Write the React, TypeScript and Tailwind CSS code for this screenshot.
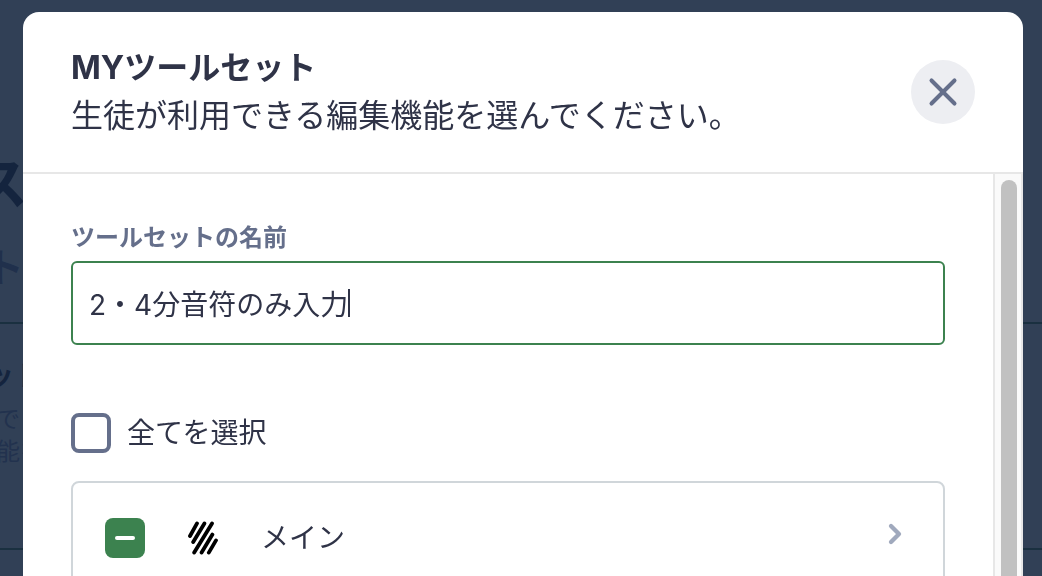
import React, { useEffect, useRef, useState } from 'react';
import { ChevronRight, X } from 'lucide-react';

function BrandMark() {
  return (
    <svg
      viewBox="0 0 30 34"
      className="w-[30px] h-[34px] shrink-0"
      fill="none"
      stroke="#000"
      strokeWidth="3.8"
      strokeLinecap="round"
      aria-hidden="true"
    >
      <path d="M9 2.4 2 15M16.4 2.4 5.2 21M24 2.4 6.2 31.6M24.4 13.6 13.6 31.6M28 19.4 20.8 31.6" />
    </svg>
  );
}

function Backdrop() {
  return (
    <main className="min-h-screen overflow-hidden bg-[#314056] text-[#14243e] whitespace-nowrap" aria-hidden="true">
      <div className="h-[324px] pt-[152px] border-b-2 border-[#1a3040]">
        <h1 className="-ml-7 w-14 text-[56px] leading-[64px] font-bold">ス</h1>
        <h2 className="-ml-4 w-10 pt-7 text-[40px] leading-[48px] font-bold text-[#20304c]">ト</h2>
      </div>
      <div className="h-[226px] pt-8 border-b-2 border-[#1a3040]">
        <h3 className="-ml-3.5 text-[28px] leading-[40px] font-bold">ット</h3>
        <p className="-ml-1 pt-2 text-2xl leading-8 text-[#22324e]">
          でき
          <br />
          能を
        </p>
      </div>
    </main>
  );
}

export default function App() {
  const [name, setName] = useState('2・4分音符のみ入力');
  const [all, setAll] = useState(false);
  const [main, setMain] = useState(false);
  const mainRef = useRef<HTMLInputElement>(null);

  useEffect(() => {
    if (mainRef.current) mainRef.current.indeterminate = true;
  }, []);

  return (
    <div
      className="font-[Inter,'Noto_Sans_CJK_JP',sans-serif] [font-optical-sizing:none] text-[#2f3347]"
      lang="ja"
    >
      <Backdrop />

      <div className="fixed inset-0 flex pt-3 pl-[23px] pr-[19px]">
        <div
          role="dialog"
          aria-labelledby="dialog-title"
          className="flex-1 min-w-0 flex flex-col bg-white rounded-t-2xl overflow-hidden"
        >
          <header className="flex items-center justify-between px-12 py-8 border-b-2 border-[#e7e7e7]">
            <div className="text-[32px] leading-[48px]">
              <h2 id="dialog-title" className="font-bold">MYツールセット</h2>
              <p>生徒が利用できる編集機能を選んでください。</p>
            </div>
            <button
              type="button"
              aria-label="閉じる"
              className="w-16 h-16 shrink-0 flex items-center justify-center rounded-full bg-[#edeef2] text-[#656f8b]"
            >
              <X size={46} strokeWidth={2.1} />
            </button>
          </header>

          <div className="flex-1 min-h-0 flex">
            <div className="flex-1 min-w-0 px-12 pt-12 overflow-hidden">
              <label htmlFor="toolset-name" className="block mb-2 text-2xl leading-[31px] font-bold text-[#656f8b]">
                ツールセットの名前
              </label>
              <div className="flex items-center h-[84px] px-4 border-2 border-[#3c824f] rounded-md">
                <input
                  id="toolset-name"
                  type="text"
                  value={name}
                  onChange={(e) => setName(e.target.value)}
                  className="field-sizing-content max-w-full h-12 text-[28px] outline-none caret-transparent"
                />
                <span className="w-0.5 h-7 shrink-0 bg-[#2f3347]" />
              </div>

              <label className="flex items-center gap-4 mt-[68px] text-[28px] leading-10">
                <input
                  type="checkbox"
                  checked={all}
                  onChange={(e) => setAll(e.target.checked)}
                  className="appearance-none w-10 h-10 shrink-0 border-4 border-[#656f8b] rounded-lg checked:bg-[#656f8b]"
                />
                全てを選択
              </label>

              <div className="flex justify-between mt-7 px-8 py-[35px] border-2 border-[#d0d6da] rounded-lg">
                <div className="flex items-center">
                  <span className="grid shrink-0 place-items-center">
                    <input
                      id="tool-main"
                      ref={mainRef}
                      type="checkbox"
                      checked={main}
                      onChange={(e) => setMain(e.target.checked)}
                      className="col-start-1 row-start-1 appearance-none w-10 h-10 rounded-lg bg-[#3c824f]"
                    />
                    <span className="col-start-1 row-start-1 w-5 h-1 rounded-xs bg-white pointer-events-none" />
                  </span>
                  <label htmlFor="tool-main" className="flex items-center gap-[43px] ml-[43px] text-[28px] leading-10">
                    <BrandMark />
                    メイン
                  </label>
                </div>
                <button type="button" aria-label="メインを開く" className="h-8 text-[#a0a9bd]">
                  <ChevronRight size={32} strokeWidth={3.2} />
                </button>
              </div>
            </div>

            <div className="w-[30px] shrink-0 flex pt-1.5 pl-1.5 border-x-2 border-[#e7e7e7] bg-[#fafafa]">
              <div className="w-4 rounded-t-full bg-[#c1c1c1]" />
            </div>
          </div>
        </div>
      </div>
    </div>
  );
}
